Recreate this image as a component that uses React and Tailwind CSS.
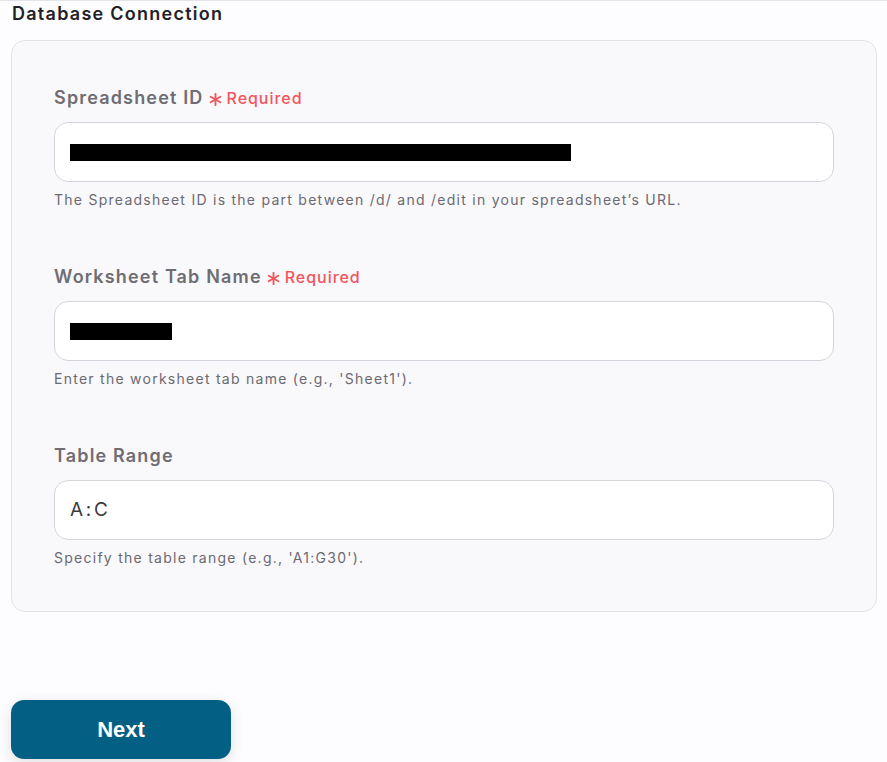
import React from 'react';

function Asterisk() {
  return (
    <svg width="13" height="13" viewBox="0 0 12 12" className="mr-[5px] mt-[3px]" stroke="#f2555b" strokeWidth="1.7" strokeLinecap="round">
      <line x1="6" y1="0.8" x2="6" y2="11.2" />
      <line x1="1.5" y1="3.4" x2="10.5" y2="8.6" />
      <line x1="1.5" y1="8.6" x2="10.5" y2="3.4" />
    </svg>
  );
}

function Field({ label, required, value, redact, help }) {
  return (
    <div className="flex flex-col">
      <div className="flex items-center h-6 mb-3">
        <span className="text-[18px] font-semibold text-[#6f6d72] leading-6 tracking-[0.065em]">{label}</span>
        {required && (
          <span className="ml-[5px] flex items-center text-[#f2555b] text-[16px] font-medium tracking-[0.06em]">
            <Asterisk />
            Required
          </span>
        )}
      </div>
      <div className="h-[60px] rounded-[14px] border border-[#d6d5dd] bg-white flex items-center px-[15px]">
        {redact && <div className="h-[17px] bg-black" style={{ width: redact }} />}
        {value && <span className="text-[19px] text-[#3b3b40] tracking-[0.14em]">{value}</span>}
      </div>
      <p className="mt-2 text-[14px] leading-5 text-[#6b6a72] tracking-[0.09em]">{help}</p>
    </div>
  );
}

export default function App() {
  return (
    <div className="min-h-[762px] bg-[#fdfcfe] border-t border-[#e4e4e8] font-['Inter',sans-serif]">
      <h2 className="pl-3 pt-[2px] text-[18px] leading-[22px] font-semibold text-[#222226] tracking-[0.07em]">Database Connection</h2>
      <div className="mt-[15px] ml-[11px] mr-[10px] rounded-[14px] border border-[#e3e2e9] bg-[#f9f8fb] px-[42px] pt-[45px] pb-[43px] flex flex-col gap-[55px]">
        <Field
          label="Spreadsheet ID"
          required
          redact={501}
          help="The Spreadsheet ID is the part between /d/ and /edit in your spreadsheet’s URL."
        />
        <Field
          label="Worksheet Tab Name"
          required
          redact={102}
          help="Enter the worksheet tab name (e.g., 'Sheet1')."
        />
        <Field
          label="Table Range"
          value="A:C"
          help="Specify the table range (e.g., 'A1:G30')."
        />
      </div>
      <div className="mt-[88px] ml-[11px]">
        <button className="w-[220px] h-[59px] rounded-[13px] bg-[#045f84] text-white text-[22px] font-bold shadow-[0_4px_14px_rgba(0,0,0,0.12)] font-['Liberation_Sans',sans-serif]">
          Next
        </button>
      </div>
    </div>
  );
}
